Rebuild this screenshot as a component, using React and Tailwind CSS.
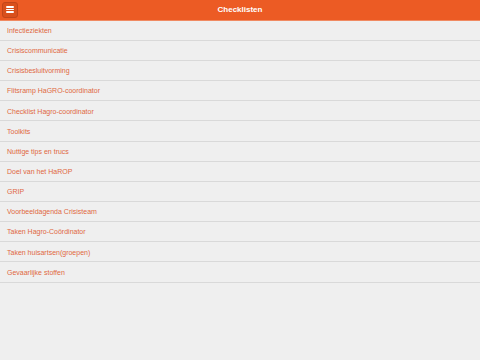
const items = [
  "Infectieziekten",
  "Crisiscommunicatie",
  "Crisisbesluitvorming",
  "Flitsramp HaGRO-coordinator",
  "Checklist Hagro-coordinator",
  "Toolkits",
  "Nuttige tips en trucs",
  "Doel van het HaROP",
  "GRIP",
  "Voorbeeldagenda Crisisteam",
  "Taken Hagro-Coördinator",
  "Taken huisartsen(groepen)",
  "Gevaarlijke stoffen",
];

export default function App() {
  return (
    <div className="w-[480px] h-[360px] bg-[#efefef] font-['Liberation_Sans',Arial,sans-serif] overflow-hidden">
      <header className="relative h-[20.6px] bg-[#ec5b24] border-b border-[#f08a62] flex items-center justify-center">
        <button className="absolute left-[1.5px] top-[1.5px] w-[16px] h-[16px] rounded-[3px] bg-[#d9501c] border border-[#c2461a] flex items-center justify-center">
          <span className="flex flex-col gap-[1px]">
            <span className="block w-[8px] h-[1.7px] rounded-[1px] bg-white" />
            <span className="block w-[8px] h-[1.7px] rounded-[1px] bg-white" />
            <span className="block w-[8px] h-[1.7px] rounded-[1px] bg-white" />
          </span>
        </button>
        <h1 className="text-[8px] font-bold text-white leading-none">Checklisten</h1>
      </header>
      <ul>
        {items.map((item) => (
          <li
            key={item}
            className="h-[20.16px] border-b border-[#d9d9d9] flex items-center pl-[7px] pt-[1.5px] text-[7px] text-[#e0683f] leading-[8px]"
          >
            {item}
          </li>
        ))}
      </ul>
    </div>
  );
}
